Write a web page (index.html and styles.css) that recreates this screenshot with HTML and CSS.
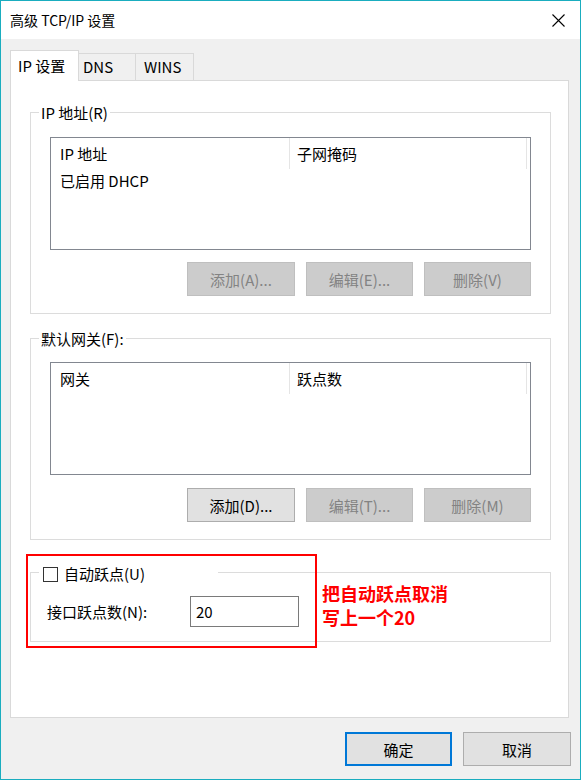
FILE: index.html
```html
<!DOCTYPE html>
<html lang="zh-CN">
<head>
<meta charset="utf-8">
<title>高级 TCP/IP 设置</title>
<link rel="stylesheet" href="styles.css">
</head>
<body>
<div class="window">
  <div class="titlebar">
    <span class="title">高级 TCP/IP 设置</span>
    <svg class="close" width="13" height="13" viewBox="0 0 13 13"><path d="M0.5 0.5 L12.5 12.5 M12.5 0.5 L0.5 12.5" stroke="#000" stroke-width="1.1" fill="none"/></svg>
  </div>
  <div class="body">
    <div class="tabs">
      <div class="tab tab-active tab-ip">IP 设置</div>
      <div class="tab tab-dns">DNS</div>
      <div class="tab tab-wins">WINS</div>
    </div>
    <div class="panel">
      <fieldset class="group group-ip">
        <legend class="legend">IP 地址(R)</legend>
        <div class="gbody">
          <div class="listbox">
            <div class="lrow lhead">
              <div class="col col1">IP 地址</div>
              <div class="col col2">子网掩码</div>
            </div>
            <div class="lrow litem">
              <div class="col col1 plain">已启用 DHCP</div>
            </div>
          </div>
          <div class="btnrow">
            <button class="btn disabled">添加(A)...</button>
            <button class="btn disabled">编辑(E)...</button>
            <button class="btn disabled">删除(V)</button>
          </div>
        </div>
      </fieldset>
      <fieldset class="group group-gw">
        <legend class="legend">默认网关(F):</legend>
        <div class="gbody gbody-gw">
          <div class="listbox">
            <div class="lrow lhead">
              <div class="col col1">网关</div>
              <div class="col col2">跃点数</div>
            </div>
          </div>
          <div class="btnrow btnrow-gw">
            <button class="btn">添加(D)...</button>
            <button class="btn disabled">编辑(T)...</button>
            <button class="btn disabled">删除(M)</button>
          </div>
        </div>
      </fieldset>
      <fieldset class="group group-metric">
        <legend class="legend legend-check"><span class="checkbox"></span><span class="checklabel">自动跃点(U)</span></legend>
        <div class="gbody gbody-metric">
          <span class="metric-label">接口跃点数(N):</span>
          <div class="textbox">20</div>
        </div>
      </fieldset>
    </div>
    <div class="footer">
      <button class="btn btn-foot btn-default">确定</button>
      <button class="btn btn-foot">取消</button>
    </div>
  </div>
  <div class="annot-box"></div>
  <div class="annot-text">把自动跃点取消<br>写上一个20</div>
</div>
</body>
</html>
```

FILE: styles.css
```css
* { box-sizing: border-box; }
html, body { margin: 0; padding: 0; }
body {
  width: 581px;
  height: 780px;
  font-family: "Noto Sans CJK SC", "Noto Sans", sans-serif;
  font-size: 15px;
  color: #000;
  background: #f0f0f0;
}
.window {
  position: relative;
  width: 581px;
  height: 780px;
  border: 1px solid #1aadbf;
  display: flex;
  flex-direction: column;
  background: #f0f0f0;
}
.titlebar {
  height: 38px;
  background: #fff;
  display: flex;
  align-items: center;
  justify-content: space-between;
  padding: 0 15px 0 9px;
}
.title { font-size: 14px; line-height: 20px; }
.close { display: block; }
.body {
  flex: 1;
  display: flex;
  flex-direction: column;
  padding: 11px 11px 13px 9px;
}
.tabs {
  display: flex;
  align-items: flex-end;
  height: 30px;
}
.tab {
  height: 27px;
  border: 1px solid #d9d9d9;
  border-bottom: none;
  background: #f0f0f0;
  line-height: 26px;
  white-space: nowrap;
}
.tab-active {
  height: 31px;
  margin-bottom: -1px;
  background: #fff;
  position: relative;
  z-index: 1;
  line-height: 29px;
}
.tab-ip { width: 69px; padding-left: 7px; }
.tab-dns { width: 57px; padding-left: 4px; border-left: none; }
.tab-wins { width: 58px; padding-left: 8px; border-left: none; }
.panel {
  flex: 1;
  background: #fff;
  border: 1px solid #d9d9d9;
  padding: 21px 17px 0 19px;
}
.group {
  margin: 0;
  padding: 0;
  border: 1px solid #dcdcdc;
  min-width: 0;
}
.group-gw { margin-top: 14px; }
.group-metric { margin-top: 22px; }
.legend {
  margin-left: 8px;
  padding: 1px 2px 0;
  line-height: 20px;
  height: 20px;
}
.legend-check {
  width: 179px;
  padding: 4px 0 0 4px;
  display: flex;
  align-items: center;
}
.checkbox {
  width: 15px;
  height: 15px;
  border: 1px solid #333;
  background: #fff;
  flex: none;
}
.checklabel { margin-left: 6px; line-height: 16px; }
.gbody { padding: 15px 19px 17px; }
.gbody-gw { padding-top: 14px; }
.listbox {
  height: 113px;
  border: 1px solid #828790;
  background: #fff;
}
.lrow { display: flex; }
.lhead { height: 31px; line-height: 31px; }
.col { white-space: nowrap; }
.col1 { width: 239px; padding-left: 9px; }
.col2 { width: 237px; padding-left: 7px; }
.lhead .col { border-right: 1px solid #e5e5e5; }
.litem { line-height: 24px; }
.plain { border-right: none; }
.btnrow {
  display: flex;
  justify-content: flex-end;
  gap: 11px;
  margin-top: 12px;
}
.btnrow-gw { margin-top: 13px; }
.btn {
  width: 107px;
  height: 34px;
  margin: 0;
  padding: 0;
  font-family: inherit;
  font-size: 15px;
  color: #000;
  background: #e1e1e1;
  border: 1px solid #adadad;
  border-radius: 0;
}
.btnrow .btn:first-child { width: 108px; }
.btn.disabled {
  background: #cccccc;
  border-color: #bfbfbf;
  color: #838383;
}
.gbody-metric {
  display: flex;
  align-items: center;
  padding: 14px 19px 14px 16px;
}
.metric-label { width: 143px; }
.textbox {
  width: 109px;
  height: 31px;
  border: 1px solid #7a7a7a;
  background: #fff;
  line-height: 29px;
  padding-left: 5px;
}
.footer {
  display: flex;
  justify-content: flex-end;
  gap: 11px;
  margin-top: 14px;
  margin-right: -2px;
}
.btn-foot { width: 108px; }
.btn-default {
  width: 107px;
  border: 2px solid #0078d7;
}
.annot-box {
  position: absolute;
  left: 25px;
  top: 553px;
  width: 291px;
  height: 94px;
  border: 2px solid #ff0000;
}
.annot-text {
  position: absolute;
  left: 321px;
  top: 580px;
  font-size: 18px;
  font-weight: bold;
  line-height: 24px;
  color: #ff0000;
  text-shadow: 0 0 1px #fff, 0 0 1px #fff;
}
```
